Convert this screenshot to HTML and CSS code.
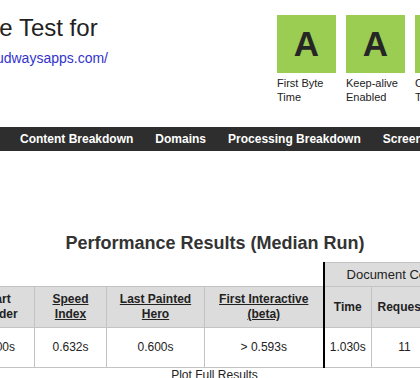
FILE: index.html
```html
<!DOCTYPE html>
<html>
  <head>
    <title>WebPageTest Test Result</title>
    <link rel="stylesheet" href="styles.css">
  </head>
  <body>
    <div class="header">
      <div class="title-block">
        <h2 class="title">Web Page Performance Test for</h2>
        <a class="test-url" href="#">https://wordpress-123456-1234567.cloudwaysapps.com/</a>
      </div>
      <!-- grades row, runs past the right edge -->
      <ul class="grades">
        <li class="grade">
          <div class="grade-box">A</div>
          <span class="grade-label">First Byte Time</span>
        </li>
        <li class="grade">
          <div class="grade-box">A</div>
          <span class="grade-label">Keep-alive Enabled</span>
        </li>
        <li class="grade">
          <div class="grade-box">A</div>
          <span class="grade-label">Compress Transfer</span>
        </li>
        <li class="grade">
          <div class="grade-box">A</div>
          <span class="grade-label">Compress Images</span>
        </li>
      </ul>
    </div>

    <ul class="nav">
      <li><a href="#">Content Breakdown</a></li>
      <li><a href="#">Domains</a></li>
      <li><a href="#">Processing Breakdown</a></li>
      <li><a href="#">Screen Shot</a></li>
    </ul>

    <div class="results">
      <h3 class="results-title">Performance Results (Median Run)</h3>
      <table class="results-table">
        <colgroup>
          <col class="c-render">
          <col class="c-speed">
          <col class="c-hero">
          <col class="c-inter">
          <col class="c-time">
          <col class="c-req">
          <col class="c-bytes">
        </colgroup>
        <thead>
          <tr class="group-row">
            <th colspan="4" class="empty"></th>
            <th colspan="3" class="group doc-start">Document Complete</th>
          </tr>
          <tr class="head-row">
            <th>Start<br>Render</th>
            <th><a href="#">Speed<br>Index</a></th>
            <th><a href="#">Last Painted<br>Hero</a></th>
            <th><a href="#">First Interactive<br>(beta)</a></th>
            <th class="doc-start">Time</th>
            <th>Requests</th>
            <th>Bytes In</th>
          </tr>
        </thead>
        <tbody>
          <tr>
            <td>0.600s</td>
            <td>0.632s</td>
            <td>0.600s</td>
            <td>&gt; 0.593s</td>
            <td class="doc-start">1.030s</td>
            <td>11</td>
            <td>262 KB</td>
          </tr>
        </tbody>
      </table>
      <div class="plot-link"><a href="#">Plot Full Results</a></div>
    </div>
  </body>
</html>
```

FILE: styles.css
```css
*{
    margin: 0;
    padding: 0;
}
html{
    overflow: hidden;
}
body{
    font-family: "Liberation Sans", Arial, sans-serif;
    color: #222;
    background: #fff;
}
ul{
    list-style: none;
}

.header{
    display: flex;
    height: 104px;
}
.title-block{
    flex: none;
    width: 520px;
    margin-left: -243px;
    padding-top: 14px;
    white-space: nowrap;
}
.title{
    font-size: 24px;
    font-weight: normal;
    color: #222;
    line-height: 28px;
}
.test-url{
    display: block;
    margin-top: 8px;
    font-size: 14px;
    line-height: 16px;
    color: #3333cc;
    text-decoration: none;
}

.grades{
    display: flex;
    gap: 10px;
    padding-top: 15px;
    flex: none;
}
.grade{
    width: 59px;
}
.grade-box{
    height: 58px;
    background-color: #9acd52;
    color: #262626;
    font-size: 35px;
    font-weight: bold;
    line-height: 58px;
    text-align: center;
}
.grade-label{
    display: block;
    margin-top: 3px;
    font-size: 11px;
    line-height: 14px;
    color: #222;
}

.nav{
    display: flex;
    margin-top: 23px;
    height: 24px;
    padding-left: 9px;
    background-color: #2e2e2e;
    white-space: nowrap;
}
.nav li{
    padding: 0 11px;
}
.nav a{
    color: #fff;
    font-size: 12px;
    font-weight: bold;
    line-height: 24px;
    text-decoration: none;
}

.results{
    padding-top: 82px;
}
.results-title{
    font-size: 18px;
    font-weight: bold;
    color: #333;
    text-align: center;
    padding-left: 10px;
    line-height: 21px;
}

.results-table{
    margin-top: 8px;
    margin-left: -41px;
    border-collapse: collapse;
    table-layout: fixed;
    width: 528px;
    font-size: 12px;
    color: #222;
}
.c-render{ width: 75px; }
.c-speed{ width: 72px; }
.c-hero{ width: 98px; }
.c-inter{ width: 119px; }
.c-time{ width: 48px; }
.c-req{ width: 66px; }
.c-bytes{ width: 50px; }

.results-table th,
.results-table td{
    border: 1px solid #c3c3c3;
    text-align: center;
    white-space: nowrap;
}
.results-table th{
    background-color: #dcdcdc;
    font-weight: bold;
    line-height: 15px;
    padding: 5px 4px;
}
.results-table th a{
    color: #222;
    text-decoration: underline;
}
.results-table .empty{
    background: none;
    border: none;
    border-bottom: 1px solid #c3c3c3;
}
.results-table .group{
    font-weight: normal;
    font-size: 13px;
    padding: 4px;
}
.results-table td{
    line-height: 15px;
    padding: 12px 4px;
}
.results-table .doc-start{
    border-left: 2px solid #000;
}

.plot-link{
    text-align: center;
    padding-left: 9px;
    font-size: 12px;
    line-height: 15px;
}
.plot-link a{
    color: #222;
    text-decoration: none;
}
```
